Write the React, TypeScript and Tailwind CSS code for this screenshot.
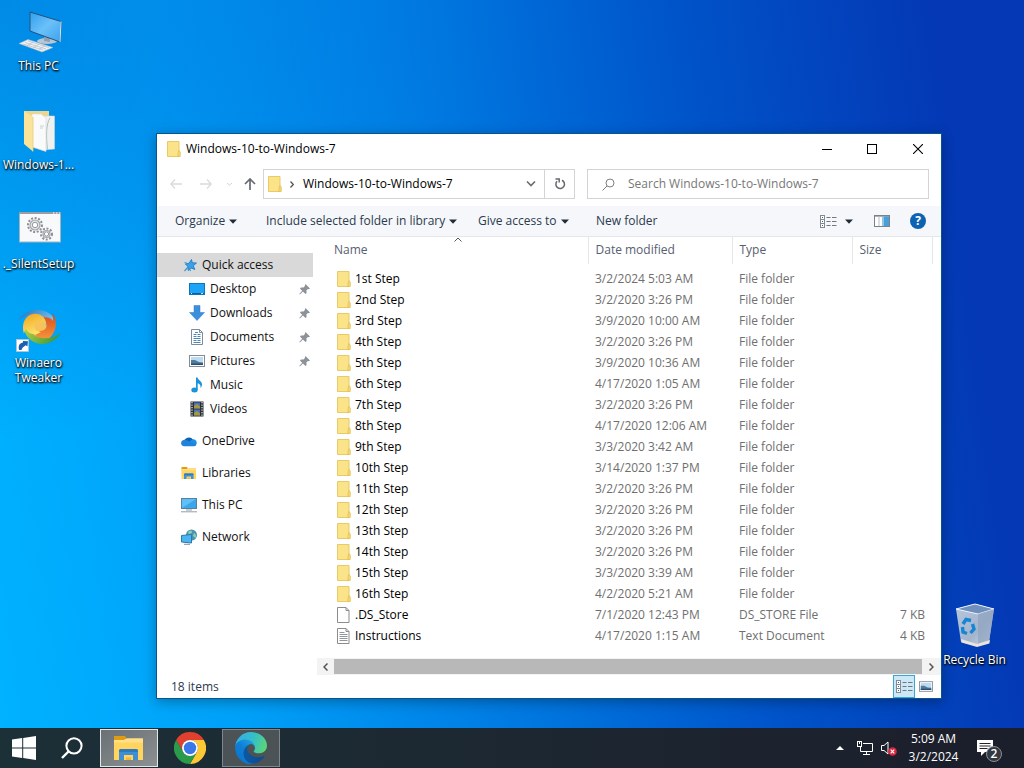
import type { ReactNode } from "react";

type SvgProps = { className?: string };

/* ---------- desktop icons ---------- */

function DesktopPcIcon() {
  return (
    <svg viewBox="0 0 48 48" className="h-12 w-12" aria-hidden="true">
      <defs>
        <linearGradient id="pcScreen" x1="0" y1="0" x2="1" y2="1">
          <stop offset="0" stopColor="#2f9fee" />
          <stop offset="0.500" stopColor="#6cc0f8" />
          <stop offset="1" stopColor="#3aa2f0" />
        </linearGradient>
      </defs>
      <ellipse cx="32" cy="33" rx="10" ry="3" fill="#b9c6d4" />
      <path d="M29 27l6 2v5l-6-1z" fill="#8fa0b3" />
      <path d="M15 4l31 9.500-1 20.500L15 23z" fill="url(#pcScreen)" stroke="#24527c" strokeWidth="1" />
      <path d="M46 13.500l-1 20.500" stroke="#dde6ee" strokeWidth="1" />
      <path d="M4 35.500L13 31.500 38 39.500 27 44z" fill="#eef1f4" stroke="#a7b4c2" strokeWidth="0.600" />
      <path d="M8 36l20 6M10 34.500l21 6.500M13 33l21 6.500M12 38l6-4M18 40l6-4M24 41.500l6-4" stroke="#a9b4c0" strokeWidth="0.600" />
    </svg>
  );
}

function DesktopFolderIcon() {
  return (
    <svg viewBox="0 0 48 48" className="h-12 w-12" aria-hidden="true">
      <path d="M9 4h25v36H14z" fill="#efd58c" />
      <path d="M27 9h12.500v33L27 43z" fill="#eef1f0" stroke="#ccd3d4" strokeWidth="0.600" />
      <path d="M35 11c-4 6-4 18-2.500 31" stroke="#9db0b8" strokeWidth="0.800" fill="none" />
      <path d="M17 7h9l5 4v33.500L17 40z" fill="#fafafa" stroke="#d8d8d8" strokeWidth="0.600" />
      <path d="M25 19h4M25 21h3" stroke="#b9c6cd" strokeWidth="0.800" />
      <path d="M9 4l9 6v34.500L9 37z" fill="#fbe39a" />
      <path d="M18 10v34.500" stroke="#e9cb78" strokeWidth="0.800" />
    </svg>
  );
}

function Gear({ x, y, r }: { x: number; y: number; r: number }) {
  return (
    <g transform={`translate(${x} ${y})`} fill="none">
      <circle r={r} stroke="#8c8f94" strokeWidth="2" strokeDasharray="2 1.600" />
      <circle r={r - 2} stroke="#a3a6aa" strokeWidth="1.200" fill="#e3e5e7" />
      <circle r={r / 2.6} stroke="#8c8f94" strokeWidth="0.900" fill="#fff" />
    </g>
  );
}

function DesktopSetupIcon() {
  return (
    <svg viewBox="0 0 48 48" className="h-12 w-12" aria-hidden="true">
      <rect x="4.500" y="6.500" width="41" height="29.500" fill="#f8f9fa" stroke="#a7b3bb" />
      <path d="M4 7h42" stroke="#9a9da1" strokeWidth="2" />
      <path d="M38 7h1.500M41 7h1.500M44 7h1" stroke="#fff" strokeWidth="1" />
      <Gear x={20} y={19} r={7} />
      <Gear x={31.5} y={28} r={5.5} />
    </svg>
  );
}

function WinaeroIcon() {
  return (
    <svg viewBox="0 0 48 48" className="h-12 w-12" aria-hidden="true">
      <defs>
        <linearGradient id="wBlue" x1="0" y1="0" x2="1" y2="0.500">
          <stop offset="0" stopColor="#1b6fc0" />
          <stop offset="1" stopColor="#79c3ee" />
        </linearGradient>
        <linearGradient id="wRed" x1="0" y1="0" x2="0" y2="1">
          <stop offset="0" stopColor="#d9481c" />
          <stop offset="1" stopColor="#f79a3c" />
        </linearGradient>
        <linearGradient id="wGreen" x1="0" y1="0" x2="1" y2="0.300">
          <stop offset="0" stopColor="#b7d344" />
          <stop offset="1" stopColor="#3f9a3a" />
        </linearGradient>
        <linearGradient id="wYellow" x1="0" y1="0" x2="0.500" y2="1">
          <stop offset="0" stopColor="#f0a31c" />
          <stop offset="1" stopColor="#fde26a" />
        </linearGradient>
      </defs>
      <circle cx="24.500" cy="22.500" r="14" fill="#f7c25a" />
      <path d="M3 16C9 5 24 1 35 9c5 4 6 9 5 13l-9-1c-1-7-6-9-11-9C13 10 8 11 3 16z" fill="url(#wBlue)" />
      <path d="M38 8c6 11 2 23-7 27-5 2-10 0-12-3l6-6c5 0 8-4 6-8-1-3-4-5-7-5 8-2 12 0 14 3z" fill="url(#wRed)" />
      <path d="M46 28c-6 9-17 14-27 9C13 34 9 28 9 22l7 1c1 7 6 10 11 10 7 1 13-1 19-5z" fill="url(#wGreen)" />
      <path d="M9 29C6 19 10 10 18 9c8-1 13 4 13 10-4-4-9-3-11 0-2 4 1 8 6 8-6 4-13 2-15-3-1 2-2 3-2 5z" fill="url(#wYellow)" />
      <rect x="1.500" y="34.500" width="12" height="12" fill="#fff" stroke="#b9c4cc" strokeWidth="0.800" />
      <path d="M4 45c-1-5 1-7 4-7.500V36l5 .2-.6 5.300-1.600-1.300C8 42 7 43 6.500 45z" fill="#1c5fae" />
    </svg>
  );
}

function RecycleIcon() {
  return (
    <svg viewBox="0 0 48 48" className="h-12 w-12" aria-hidden="true">
      <defs>
        <linearGradient id="bin" x1="0" y1="0" x2="1" y2="1">
          <stop offset="0" stopColor="#b7c7de" />
          <stop offset="0.600" stopColor="#a3b4cc" />
          <stop offset="1" stopColor="#dcdfe3" />
        </linearGradient>
      </defs>
      <path d="M5 7l19-5 19 5-5 33-13 4-15-4z" fill="url(#bin)" />
      <path d="M5 7l19-5 19 5-16 5z" fill="#6f8fbd" stroke="#eef4fb" strokeWidth="1" />
      <path d="M27 12l16-5-5 33-11 4z" fill="#8fa4c0" opacity="0.700" />
      <path d="M10 37l16 5 13-4-.6 3.500L26 45l-15.500-4.500z" fill="#e8e4de" />
      <g fill="none" stroke="#1685d4" strokeWidth="3.400">
        <path d="M12 22l3-4.500 5 1" />
        <path d="M21.500 22l1.500 5-3.500 4" />
        <path d="M16 31.500L12 30l-.5-5" />
      </g>
    </svg>
  );
}

function DesktopItem({ icon, label, className = "" }: { icon: ReactNode; label: ReactNode; className?: string }) {
  return (
    <button
      type="button"
      className={`flex w-[77px] flex-col items-center gap-0.5 text-center text-[12px] leading-[15px] whitespace-nowrap text-white [text-shadow:1px_1px_2px_#000,0_1px_2px_#000] ${className}`}
    >
      {icon}
      <span>{label}</span>
    </button>
  );
}

/* ---------- small icons ---------- */

function FolderIcon({ className = "" }: SvgProps) {
  return (
    <svg viewBox="0 0 14 16" className={`h-4 w-3.5 shrink-0 ${className}`} aria-hidden="true">
      <path d="M.5.500h11.500v15H.5z" fill="#fbe38a" stroke="#e8ca66" />
      <path d="M12 9.500l1.300 1.800v4.200H10.800l.4-4z" fill="#f6d976" stroke="#e0bd4e" strokeWidth="0.700" />
    </svg>
  );
}

function FileIcon({ lines = false }: { lines?: boolean }) {
  return (
    <svg viewBox="0 0 14 16" className="h-4 w-3.5 shrink-0" aria-hidden="true">
      <path d="M.5.5h8.500l3 3v12H.5z" fill="#fff" stroke="#8c8c8c" />
      <path d="M9 .5v3h3" fill="none" stroke="#8c8c8c" />
      {lines && <path d="M2.500 4.500h5M2.500 6.500h8M2.500 8.500h8M2.500 10.500h8M2.500 12.500h8" stroke="#8f979e" />}
    </svg>
  );
}

function Triangle() {
  return (
    <svg viewBox="0 0 8 5" className="h-[5px] w-2" aria-hidden="true">
      <path d="M0 .5h8L4 4.800z" fill="#222c38" />
    </svg>
  );
}

function DetailsIcon() {
  return (
    <svg viewBox="0 0 17 13" className="h-[13px] w-[17px]" aria-hidden="true">
      <rect x=".5" y=".5" width="4" height="12" fill="#fff" stroke="#848a91" />
      <path d="M1 4.500h3M1 8.500h3" stroke="#848a91" />
      <path d="M2 2.500h1M2 6.500h1M2 10.500h1" stroke="#33679b" />
      <path
        d="M6.500 2.500h4M12 2.500h4.500M6.500 6.500h4M12 6.500h4.500M6.500 10.500h4M12 10.500h4.500"
        stroke="#707780"
      />
    </svg>
  );
}

function PreviewPaneIcon() {
  return (
    <svg viewBox="0 0 16 12" className="h-3 w-4" aria-hidden="true">
      <rect x=".5" y=".5" width="15" height="11" fill="#fff" stroke="#7b8288" />
      <path d="M1 1.500h14" stroke="#a9b0b6" />
      <path d="M5 1v10" stroke="#b9bfc4" />
      <rect x="8" y="1.500" width="7" height="9.500" fill="#4a9fd8" />
      <rect x="8" y="1.500" width="2" height="9.500" fill="#8cc6ea" />
    </svg>
  );
}

function PictureIcon({ className = "h-3 w-4" }: SvgProps) {
  return (
    <svg viewBox="0 0 16 12" className={className} aria-hidden="true">
      <rect x=".5" y=".5" width="15" height="11" fill="#fff" stroke="#848b92" />
      <rect x="2" y="2" width="12" height="8" fill="#b9dcf3" />
      <path d="M2 5l4 0 4 2 4 .5v2.500H2z" fill="#547c9a" />
      <path d="M2 8.500h12V10H2z" fill="#264f73" />
    </svg>
  );
}

function PinIcon() {
  return (
    <svg viewBox="0 0 11 11" className="h-[11px] w-[11px]" aria-hidden="true">
      <path
        d="M6.500 0l4.500 4.500-1.400.7-.7-.2-1.500 1.600.2 2.400-1.100 1.100-2.500-2.500L.9 10.600l-.6-.5 2.900-3.300L.9 4.500 2 3.400l2.400.2L6 2.100l-.2-.7z"
        fill="#8d9298"
      />
    </svg>
  );
}

function QuickAccessIcon() {
  return (
    <svg viewBox="0 0 16 16" className="h-4 w-4" aria-hidden="true">
      <path
        d="M9.500 2.500l.8 3.300 4.200.2-3.200 2.700 1.500 3.800-3.800-1.600L6.200 13.500l-.2-4L3.300 7l3.800-.8z"
        fill="#3aa0e8"
        stroke="#1f7dc4"
        strokeWidth="0.900"
      />
      <path d="M2.500 14l3.500-4M2.500 5.500l3 1M8 12.500l.5 1.500" stroke="#3f97d8" strokeWidth="1.200" />
    </svg>
  );
}

function DesktopSmallIcon() {
  return (
    <svg viewBox="0 0 16 16" className="h-4 w-4" aria-hidden="true">
      <rect x=".5" y="2.500" width="15" height="11" fill="#1ca4f7" stroke="#1373b8" />
      <path d="M1 12.500h14" stroke="#0c5c9b" />
      <path d="M2 12.500h1M12 12.500h2" stroke="#bfe4fb" />
    </svg>
  );
}

function DownloadIcon() {
  return (
    <svg viewBox="0 0 16 16" className="h-4 w-4" aria-hidden="true">
      <path d="M5 .5h6v7h4.500L8 15.500.5 7.500H5z" fill="#3c8fdc" stroke="#2d7cc6" strokeWidth="0.500" />
    </svg>
  );
}

function DocumentIcon() {
  return (
    <svg viewBox="0 0 16 16" className="h-4 w-4" aria-hidden="true">
      <path d="M2.500.5h8l3 3v12h-11z" fill="#fff" stroke="#7d8c99" />
      <path d="M10.500.5v3h3" fill="none" stroke="#7d8c99" />
      <path
        d="M6 3.500h3M4.500 5.500h3M8.500 5.500h3M4.500 7.500h3M8.500 7.500h3M4.500 9.500h7M4.500 11.500h3M8.500 11.500h3M4.500 13.500h7"
        stroke="#4b86b4"
      />
    </svg>
  );
}

function MusicIcon() {
  return (
    <svg viewBox="0 0 16 16" className="h-4 w-4" aria-hidden="true">
      <ellipse cx="5.500" cy="13" rx="3.200" ry="2.500" fill="#1a93dc" />
      <path d="M7 .5h1.600c.4 3 4.400 3.500 4.400 7 0 1.500-.6 2.500-1.600 3.500.7-3-1-4.200-2.700-4.700V13H7z" fill="#1a93dc" />
    </svg>
  );
}

function VideoIcon() {
  return (
    <svg viewBox="0 0 16 16" className="h-4 w-4" aria-hidden="true">
      <rect x="1.500" y=".5" width="13" height="15" fill="#2b2f36" />
      <path d="M3 1v14M13 1v14" stroke="#e3e7ea" strokeWidth="1.200" strokeDasharray="1.200 1.300" />
      <rect x="5" y="1.500" width="6" height="6" fill="#4d6fc4" />
      <rect x="5" y="8.500" width="6" height="6" fill="#4d6fc4" />
      <path d="M5 5l3-2 3 2.500v2H5zM5 12l3-2 3 2.500v2H5z" fill="#a39a3c" />
    </svg>
  );
}

function OneDriveIcon() {
  return (
    <svg viewBox="0 0 16 16" className="h-4 w-4" aria-hidden="true">
      <path d="M3 9.500A5 5 0 0 1 12 6.500l-4 4z" fill="#0f62b8" />
      <path d="M6.500 10L11.500 6.300A3.600 3.600 0 0 1 15.500 11l-2 2z" fill="#1a90e0" />
      <path d="M3.300 13.300A3.200 3.200 0 0 1 2.500 7q1.800-.6 3.300.3l9.700 4.200a2.500 2.500 0 0 1-2.300 1.800z" fill="#1f83de" />
    </svg>
  );
}

function LibrariesIcon({ className = "h-4 w-4" }: SvgProps) {
  return (
    <svg viewBox="0 0 32 32" className={className} aria-hidden="true">
      <path d="M1 4h11l2 3h16v4H1z" fill="#dd9c14" />
      <path d="M1 8h10l3-1.500h16V28H1z" fill="#ffd560" />
      <path d="M1 8h10l3-1.500h16v4H1z" fill="#ffe08a" />
      <path d="M6 28V19q0-2 2-2h15q2 0 2 2v9h-5v-5h-9v5z" fill="#3f8fd6" />
      <path d="M6 20v-1q0-2 2-2h15q2 0 2 2v1z" fill="#2f79bf" />
      <path d="M13 28v-2.500h5V28z" fill="#f2b73a" />
    </svg>
  );
}

function PcSmallIcon() {
  return (
    <svg viewBox="0 0 16 16" className="h-4 w-4" aria-hidden="true">
      <rect x=".5" y="1.500" width="15" height="10" fill="#5ec0f6" stroke="#5a7f99" />
      <path d="M1 11L15 2v9z" fill="#3aa6ec" />
      <path d="M5 13h6M0 14.800h16" stroke="#93a0aa" strokeWidth="1" />
    </svg>
  );
}

function NetworkSmallIcon() {
  return (
    <svg viewBox="0 0 16 16" className="h-4 w-4" aria-hidden="true">
      <circle cx="10.500" cy="6" r="5.500" fill="#4b93b0" />
      <path d="M7 3c2-2 4-1.500 4 0s-3 1.500-3 3zM13 4c2 1 2.500 3 1.500 5L12 7z" fill="#8fd0b0" />
      <path d="M.5 6.500l10-1v8.500L.5 13z" fill="#4db4f2" stroke="#2a78ad" />
      <path d="M3 15.300h6" stroke="#78909f" />
    </svg>
  );
}

/* ---------- explorer window ---------- */

const pinned: [string, ReactNode, boolean][] = [
  ["Desktop", <DesktopSmallIcon />, true],
  ["Downloads", <DownloadIcon />, true],
  ["Documents", <DocumentIcon />, true],
  ["Pictures", <PictureIcon />, true],
  ["Music", <MusicIcon />, false],
  ["Videos", <VideoIcon />, false],
];

const roots: [string, ReactNode][] = [
  ["OneDrive", <OneDriveIcon />],
  ["Libraries", <LibrariesIcon />],
  ["This PC", <PcSmallIcon />],
  ["Network", <NetworkSmallIcon />],
];

type Row = { name: string; date: string; type?: string; size?: string };

const rows: Row[] = [
  { name: "1st Step", date: "3/2/2024 5:03 AM" },
  { name: "2nd Step", date: "3/2/2020 3:26 PM" },
  { name: "3rd Step", date: "3/9/2020 10:00 AM" },
  { name: "4th Step", date: "3/2/2020 3:26 PM" },
  { name: "5th Step", date: "3/9/2020 10:36 AM" },
  { name: "6th Step", date: "4/17/2020 1:05 AM" },
  { name: "7th Step", date: "3/2/2020 3:26 PM" },
  { name: "8th Step", date: "4/17/2020 12:06 AM" },
  { name: "9th Step", date: "3/3/2020 3:42 AM" },
  { name: "10th Step", date: "3/14/2020 1:37 PM" },
  { name: "11th Step", date: "3/2/2020 3:26 PM" },
  { name: "12th Step", date: "3/2/2020 3:26 PM" },
  { name: "13th Step", date: "3/2/2020 3:26 PM" },
  { name: "14th Step", date: "3/2/2020 3:26 PM" },
  { name: "15th Step", date: "3/3/2020 3:39 AM" },
  { name: "16th Step", date: "4/2/2020 5:21 AM" },
  { name: ".DS_Store", date: "7/1/2020 12:43 PM", type: "DS_STORE File", size: "7 KB" },
  { name: "Instructions", date: "4/17/2020 1:15 AM", type: "Text Document", size: "4 KB" },
];

function TitleBar() {
  return (
    <header className="flex h-[30px] items-center pl-2.5">
      <FolderIcon />
      <h1 className="ml-[5px] flex-1 text-black">Windows-10-to-Windows-7</h1>
      <button type="button" aria-label="Minimize" className="flex h-full w-[45px] items-center justify-center">
        <svg viewBox="0 0 10 10" className="h-2.5 w-2.5">
          <path d="M0 5.500h10" stroke="#000" />
        </svg>
      </button>
      <button type="button" aria-label="Maximize" className="flex h-full w-[45px] items-center justify-center">
        <svg viewBox="0 0 10 10" className="h-2.5 w-2.5">
          <rect x=".5" y=".5" width="9" height="9" fill="none" stroke="#000" />
        </svg>
      </button>
      <button type="button" aria-label="Close" className="flex h-full w-[47px] items-center justify-center">
        <svg viewBox="0 0 10 10" className="h-2.5 w-2.5">
          <path d="M0 0l10 10M10 0L0 10" stroke="#000" strokeWidth="1.100" />
        </svg>
      </button>
    </header>
  );
}

function AddressRow() {
  return (
    <div className="flex items-center px-3 pt-[5px] pb-[7px]">
      <button type="button" aria-label="Back" className="flex w-[30px] pl-px">
        <svg viewBox="0 0 12 10" className="h-2.5 w-3" fill="none" stroke="#d8dadc" strokeWidth="1.300">
          <path d="M5 .5L.8 5 5 9.500M1 5h11" />
        </svg>
      </button>
      <button type="button" aria-label="Forward" className="flex w-[26px] pl-px">
        <svg viewBox="0 0 12 10" className="h-2.5 w-3" fill="none" stroke="#d8dadc" strokeWidth="1.300">
          <path d="M7 .5L11.200 5 7 9.500M11 5H0" />
        </svg>
      </button>
      <button type="button" aria-label="Recent locations" className="flex w-[19px] pl-0.5">
        <svg viewBox="0 0 5 3" className="h-[3px] w-[5px]" fill="none" stroke="#cfd2d5">
          <path d="M0 0l2.500 2L5 0" />
        </svg>
      </button>
      <button type="button" aria-label="Up" className="flex w-[19px]">
        <svg viewBox="0 0 12 12" className="h-3 w-3" fill="none" stroke="#666b70" strokeWidth="1.700">
          <path d="M1 6l5-5 5 5M6 1.500V12" />
        </svg>
      </button>
      <div className="flex h-[30px] w-[312px] items-stretch border border-[#d4d4d4]">
        <div className="flex flex-1 items-center pl-1">
          <FolderIcon />
          <svg viewBox="0 0 4 7" className="ml-2 h-[7px] w-1" fill="none" stroke="#555" strokeWidth="1.300">
            <path d="M.5.5l2.800 3-2.800 3" />
          </svg>
          <span className="ml-[9px] flex-1 text-black">Windows-10-to-Windows-7</span>
          <button type="button" aria-label="Previous locations" className="flex w-[22px] pl-1">
            <svg viewBox="0 0 10 6" className="h-1.5 w-2.5" fill="none" stroke="#6a6e72" strokeWidth="1.600">
              <path d="M1 .5l4 4 4-4" />
            </svg>
          </button>
        </div>
        <button
          type="button"
          aria-label="Refresh"
          className="flex w-[30px] items-center justify-center border-l border-[#d4d4d4]"
        >
          <svg viewBox="0 0 12 12" className="h-3 w-3" fill="none" stroke="#66696d" strokeWidth="1.500">
            <path d="M8 2.300A4.300 4.300 0 1 1 3 3.300M1.500 1h3.700v3.500" />
          </svg>
        </button>
      </div>
      <label className="ml-3 flex h-[30px] flex-1 items-center border border-[#d4d4d4] pl-3.5">
        <svg viewBox="0 0 13 13" className="h-[13px] w-[13px]" fill="none" stroke="#7d8185">
          <circle cx="8" cy="5" r="4" />
          <path d="M5 8L.5 12.500" />
        </svg>
        <input
          type="search"
          aria-label="Search Windows-10-to-Windows-7"
          placeholder="Search Windows-10-to-Windows-7"
          className="ml-[13px] min-w-0 flex-1 outline-none placeholder:text-[#777777]"
        />
      </label>
    </div>
  );
}

function CommandBar() {
  return (
    <div className="flex h-[31px] items-center border-b border-[#e3e6ea] bg-[#f5f7fa] pr-[15px] pl-[18px] text-[#2b3a4e]">
      <button type="button" className="flex w-[91px] items-center gap-1">
        Organize <Triangle />
      </button>
      <button type="button" className="flex w-[212px] items-center gap-1">
        Include selected folder in library <Triangle />
      </button>
      <button type="button" className="flex w-[118px] items-center gap-1">
        Give access to <Triangle />
      </button>
      <button type="button">New folder</button>
      <div className="ml-auto flex items-center">
        <button type="button" aria-label="Change your view" className="flex">
          <DetailsIcon />
        </button>
        <button type="button" aria-label="More view options" className="ml-2 flex">
          <Triangle />
        </button>
        <button type="button" aria-label="Show the preview pane" className="ml-[21px] flex">
          <PreviewPaneIcon />
        </button>
        <button
          type="button"
          aria-label="Get help"
          className="ml-5 flex h-4 w-4 items-center justify-center rounded-full bg-[#0d62b2] text-[12px] font-bold text-white"
        >
          ?
        </button>
      </div>
    </div>
  );
}

function NavPane() {
  return (
    <nav aria-label="Folders" className="w-40 shrink-0 pt-4 pr-1 text-[#111]">
      <a href="#quick" className="flex h-6 items-center gap-1 bg-[#d9d9d9] pl-[25px]">
        <QuickAccessIcon />
        Quick access
      </a>
      {pinned.map(([label, icon, pin]) => (
        <a key={label} href={`#${label}`} className="flex h-6 items-center gap-[5px] pr-[3px] pl-8">
          {icon}
          <span className="flex-1">{label}</span>
          {pin && <PinIcon />}
        </a>
      ))}
      <div className="mt-2 flex flex-col gap-2">
        {roots.map(([label, icon]) => (
          <a key={label} href={`#${label}`} className="flex h-6 items-center gap-[5px] pl-6">
            {icon}
            {label}
          </a>
        ))}
      </div>
    </nav>
  );
}

function FileTable() {
  return (
    <table className="w-full table-fixed border-collapse text-[#6f6f6f]">
      <colgroup>
        <col />
        <col className="w-36" />
        <col className="w-[120px]" />
        <col className="w-20" />
        <col className="w-[9px]" />
      </colgroup>
      <thead>
        <tr className="h-[27px] text-left text-[#566070]">
          <th scope="col" className="relative border-r border-[#e5e5e5] py-0 pb-0.5 pl-[17px] font-normal">
            Name
            <svg viewBox="0 0 8 5" className="absolute top-0 left-1/2 ml-0.5 h-[5px] w-2" fill="none" stroke="#555">
              <path d="M.5 4.500L4 1l3.500 3.500" />
            </svg>
          </th>
          <th scope="col" className="border-r border-[#e5e5e5] pb-0.5 pl-[7px] font-normal">
            Date modified
          </th>
          <th scope="col" className="border-r border-[#e5e5e5] pb-0.5 pl-[7px] font-normal">
            Type
          </th>
          <th scope="col" className="border-r border-[#e5e5e5] pb-0.5 pl-[7px] font-normal">
            Size
          </th>
          <td />
        </tr>
      </thead>
      <tbody>
        <tr className="h-1">
          <td colSpan={5} />
        </tr>
        {rows.map((row) => (
          <tr key={row.name} className="h-[21px]">
            <td className="p-0 pl-5">
              <span className="flex items-center gap-1 text-black">
                {row.type ? <FileIcon lines={row.name === "Instructions"} /> : <FolderIcon />}
                {row.name}
              </span>
            </td>
            <td className="p-0 pl-[7px]">{row.date}</td>
            <td className="p-0 pl-[7px]">{row.type ?? "File folder"}</td>
            <td className="p-0 pr-[7px] text-right">{row.size}</td>
            <td />
          </tr>
        ))}
      </tbody>
    </table>
  );
}

function ScrollBar() {
  return (
    <div className="mt-auto flex h-[17px] items-center bg-[#f3f3f3]">
      <button type="button" aria-label="Scroll left" className="flex h-full w-[17px] items-center justify-center">
        <svg viewBox="0 0 5 8" className="h-2 w-[5px]" fill="none" stroke="#555" strokeWidth="1.500">
          <path d="M4.500.5L1 4l3.500 3.500" />
        </svg>
      </button>
      <div className="h-[15px] flex-1 bg-[#b8b8b8]" />
      <button type="button" aria-label="Scroll right" className="flex h-full w-[19px] items-center justify-center">
        <svg viewBox="0 0 5 8" className="h-2 w-[5px]" fill="none" stroke="#555" strokeWidth="1.500">
          <path d="M.5.5L4 4 .5 7.500" />
        </svg>
      </button>
    </div>
  );
}

function ExplorerWindow() {
  return (
    <section
      aria-label="Windows-10-to-Windows-7"
      className="absolute top-[134px] right-[83px] bottom-[30px] left-[157px] flex flex-col bg-white shadow-[0_0_0_1px_#07558c,0_3px_12px_1px_rgba(0,0,0,0.3)]"
    >
      <TitleBar />
      <AddressRow />
      <CommandBar />
      <div className="flex min-h-0 flex-1">
        <NavPane />
        <main className="flex min-w-0 flex-1 flex-col">
          <FileTable />
          <ScrollBar />
        </main>
      </div>
      <footer className="flex h-[23px] items-center pr-2 pl-3.5 text-[#2b3a4e]">
        <span className="flex-1">18 items</span>
        <button
          type="button"
          aria-label="Details view"
          className="flex h-[23px] w-[22px] items-center justify-center border border-[#3fa6cf] bg-[#cbe8f6]"
        >
          <DetailsIcon />
        </button>
        <button type="button" aria-label="Large icons view" className="ml-1 flex">
          <PictureIcon className="h-[11px] w-3.5" />
        </button>
      </footer>
    </section>
  );
}

/* ---------- taskbar ---------- */

function ChromeIcon() {
  const sector = "M0-8H13.860A16 16 0 0 0-13.860-8L-6.930 4A8 8 0 0 1 0-8z";
  return (
    <svg viewBox="-16 -16 32 32" className="h-8 w-8" aria-hidden="true">
      <path d={sector} fill="#e2402f" />
      <path d={sector} fill="#fcc934" transform="rotate(120)" />
      <path d={sector} fill="#2a9a4b" transform="rotate(240)" />
      <circle r="8" fill="#fff" />
      <circle r="6.200" fill="#3b78e7" />
    </svg>
  );
}

function EdgeIcon() {
  return (
    <svg viewBox="4 4 257 257" className="h-8 w-8" aria-hidden="true">
      <defs>
        <linearGradient id="edgeA" x1="63" y1="178" x2="241" y2="178" gradientUnits="userSpaceOnUse">
          <stop offset="0" stopColor="#0c59a4" />
          <stop offset="1" stopColor="#114a8b" />
        </linearGradient>
        <linearGradient id="edgeB" x1="158" y1="100" x2="46" y2="222" gradientUnits="userSpaceOnUse">
          <stop offset="0" stopColor="#1b9de2" />
          <stop offset="0.500" stopColor="#0f7fd4" />
          <stop offset="1" stopColor="#0a78d0" />
        </linearGradient>
        <linearGradient id="edgeC" x1="30" y1="60" x2="250" y2="140" gradientUnits="userSpaceOnUse">
          <stop offset="0" stopColor="#35b1e1" />
          <stop offset="0.500" stopColor="#35bfc5" />
          <stop offset="1" stopColor="#5cd676" />
        </linearGradient>
      </defs>
      <path
        fill="url(#edgeA)"
        d="M235.680 195.460a93.730 93.730 0 0 1-10.540 4.710 101.870 101.870 0 0 1-35.900 6.460c-47.320 0-88.540-32.550-88.540-74.320A31.480 31.480 0 0 1 117.130 105c-42.800 1.800-53.800 46.400-53.800 72.530 0 73.880 68.090 81.370 82.760 81.370 7.910 0 19.840-2.300 27-4.560l1.310-.44a128.340 128.340 0 0 0 66.600-52.800 4 4 0 0 0-5.320-5.640z"
      />
      <path
        fill="url(#edgeB)"
        d="M110.340 246.340A79.200 79.200 0 0 1 87.600 225a80.720 80.720 0 0 1 29.530-120c3.120-1.470 8.450-4.130 15.540-4a32.350 32.350 0 0 1 25.690 13 31.880 31.880 0 0 1 6.360 18.660c0-.21 24.460-79.600-80-79.600-43.900 0-80 41.660-80 78.210a130.150 130.150 0 0 0 12.110 56 128 128 0 0 0 156.380 67.110 75.550 75.550 0 0 1-62.780-8z"
      />
      <path
        fill="url(#edgeC)"
        d="M156.940 153.780c-.81 1.050-3.300 2.500-3.300 5.660 0 2.610 1.700 5.120 4.720 7.230 14.380 10 41.490 8.680 41.560 8.680a59.560 59.560 0 0 0 30.270-8.350 61.380 61.380 0 0 0 30.430-52.880c.26-22.410-8-37.310-11.340-43.910C228.090 28.760 182.350 4.860 132.610 4.860A128 128 0 0 0 4.630 131.020c.48-36.540 36.800-66.050 80-66.050 3.500 0 23.460.34 42 10.070 16.340 8.580 24.900 18.940 30.850 29.210 6.180 10.670 7.280 24.150 7.280 29.520s-2.740 13.330-7.820 20.010z"
      />
    </svg>
  );
}

function Taskbar() {
  return (
    <footer className="flex h-10 shrink-0 items-center bg-linear-to-r from-[#1c3038] to-[#1b1e2b] text-[12px] text-white">
      <button type="button" aria-label="Start" className="flex w-12 justify-center">
        <svg viewBox="0 0 24 24" className="h-6 w-6" fill="#fff">
          <path d="M0 3.400L10.200 2v9.500H0zM11.200 1.900L24 0v11.500H11.200zM0 12.500h10.200V22L0 20.600zM11.200 12.500H24V24l-12.800-1.900z" />
        </svg>
      </button>
      <button type="button" aria-label="Search" className="flex w-12 justify-center">
        <svg viewBox="0 0 22 22" className="h-[22px] w-[22px]" fill="none" stroke="#fff" strokeWidth="2">
          <circle cx="13" cy="8.800" r="7.600" />
          <path d="M7.500 14.500L1 21" strokeWidth="2.400" />
        </svg>
      </button>
      <button
        type="button"
        aria-label="File Explorer"
        className="ml-1 flex h-[38px] w-[58px] items-center justify-center border border-[#e4e7e8] bg-linear-to-br from-[#6a7174] to-[#8c9092]"
      >
        <LibrariesIcon className="h-8 w-8" />
      </button>
      <button type="button" aria-label="Chrome" className="flex w-16 justify-center">
        <ChromeIcon />
      </button>
      <button
        type="button"
        aria-label="Edge"
        className="flex h-[38px] w-[58px] items-center justify-center border border-[#7d868c] bg-[#4b5357]"
      >
        <EdgeIcon />
      </button>
      <div className="ml-auto flex h-full items-center">
        <button type="button" aria-label="Show hidden icons" className="flex">
          <svg viewBox="0 0 8 4" className="h-1 w-2">
            <path d="M0 4l4-4 4 4z" fill="#fff" />
          </svg>
        </button>
        <button type="button" aria-label="Network" className="ml-[13px] flex">
          <svg viewBox="0 0 16 14" className="h-3.5 w-4" fill="none" stroke="#fff">
            <path d="M6 2.500h9.500v8H3.500V6M9.500 10.500v3M6 13.500h7" />
            <rect x=".5" y=".5" width="4" height="5" />
            <path d="M2.500 1v2" />
          </svg>
        </button>
        <button type="button" aria-label="Volume muted" className="ml-2 flex">
          <svg viewBox="0 0 16 15" className="h-[15px] w-4">
            <path d="M.5 4.500h2.500l4-3.500v12l-4-3.500H.5z" fill="none" stroke="#fff" />
            <circle cx="11.500" cy="10.500" r="4.300" fill="#d7263d" />
            <path d="M9.700 8.700l3.600 3.600M13.300 8.700l-3.600 3.600" stroke="#fff" strokeWidth="1.200" />
          </svg>
        </button>
        <div className="w-[73px] text-center leading-[18px]">
          <time className="block">5:09 AM</time>
          <time className="block">3/2/2024</time>
        </div>
        <button type="button" aria-label="2 notifications" className="relative mr-[22px] ml-[7px] flex h-10 w-[25px] items-center">
          <svg viewBox="0 0 16 16" className="h-4 w-4">
            <path d="M0 0h16v12H8l-4 4v-4H0z" fill="#fff" />
            <path d="M2.500 3.500h11M2.500 6h11M2.500 8.500h8" stroke="#20242f" />
          </svg>
          <span className="absolute right-0 bottom-1.5 flex h-4 w-4 items-center justify-center rounded-full border border-[#8d9096] bg-[#33373f] text-[12px] font-semibold">
            2
          </span>
        </button>
      </div>
    </footer>
  );
}

export default function App() {
  return (
    <div className="flex min-h-screen flex-col font-['Open_Sans','Noto_Sans',sans-serif] text-[12px] leading-4">
      <div className="relative min-h-[728px] flex-1 overflow-hidden bg-[radial-gradient(circle_at_0%_0%,rgba(0,80,190,0.35)_0%,rgba(0,80,190,0)_35%),linear-gradient(82deg,#00b2ff_0%,#00a0f8_22%,#007be2_45%,#0052c8_70%,#0438b4_92%)]">
        <div className="flex flex-col pt-2">
          <DesktopItem icon={<DesktopPcIcon />} label="This PC" className="h-[99px]" />
          <DesktopItem icon={<DesktopFolderIcon />} label="Windows-1..." className="h-[99px]" />
          <DesktopItem icon={<DesktopSetupIcon />} label="._SilentSetup" className="h-[99px]" />
          <DesktopItem
            icon={<WinaeroIcon />}
            label={
              <>
                Winaero
                <br />
                Tweaker
              </>
            }
            className="h-[99px]"
          />
        </div>
        <ExplorerWindow />
        <DesktopItem icon={<RecycleIcon />} label="Recycle Bin" className="absolute right-[11px] bottom-[61px]" />
      </div>
      <Taskbar />
    </div>
  );
}
